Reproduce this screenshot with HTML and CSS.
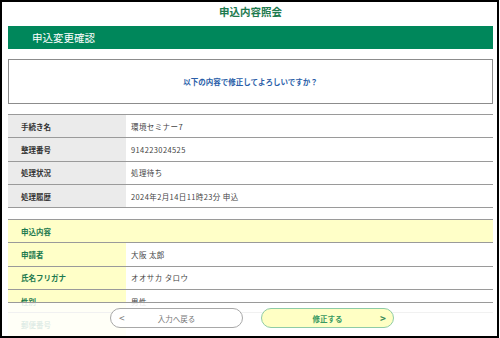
FILE: index.html
```html
<!DOCTYPE html>
<html lang="ja">
<head>
<meta charset="UTF-8" />
<meta name="viewport" content="width=device-width, initial-scale=1" />
<title>申込内容照会</title>
<link rel="stylesheet" href="styles.css">
</head>
<body>

<div class="frame">
  <h1 class="page-title">申込内容照会</h1>
  <div class="section-bar">申込変更確認</div>

  <div class="message">以下の内容で修正してよろしいですか？</div>

  <div class="info">
    <div class="row"><div class="label">手続き名</div><div class="value">環境セミナー7</div></div>
    <div class="row"><div class="label">整理番号</div><div class="value">914223024525</div></div>
    <div class="row"><div class="label">処理状況</div><div class="value">処理待ち</div></div>
    <div class="row"><div class="label">処理履歴</div><div class="value">2024年2月14日11時23分 申込</div></div>
  </div>

  <div class="info apply">
    <div class="row head"><div class="label">申込内容</div></div>
    <div class="row"><div class="label">申請者</div><div class="value">大阪 太郎</div></div>
    <div class="row"><div class="label">氏名フリガナ</div><div class="value">オオサカ タロウ</div></div>
    <div class="row"><div class="label">性別</div><div class="value">男性</div></div>
    <div class="row"><div class="label">郵便番号</div><div class="value">5300001</div></div>
  </div>

  <div class="footer">
    <button class="btn back"><span class="arrow">&lt;</span>入力へ戻る</button>
    <button class="btn next">修正する<span class="arrow">&gt;</span></button>
  </div>
</div>

</body>
</html>
```

FILE: styles.css
```css
* {
  box-sizing: border-box;
}
body {
  margin: 0;
  background: #fff;
  font-family: "Noto Sans CJK JP", "Noto Sans", sans-serif;
  color: #333;
}
.frame {
  position: relative;
  width: 499px;
  height: 338px;
  border: 2px solid #000;
  padding: 0 4px 0 6px;
  overflow: hidden;
}
.page-title {
  margin: 0 0 4px;
  height: 20px;
  line-height: 20px;
  text-align: center;
  font-size: 10.5px;
  font-weight: bold;
  color: #1d7a4e;
}
.section-bar {
  height: 23px;
  line-height: 23px;
  padding-left: 24px;
  background: #00875b;
  color: #fff;
  font-size: 10.5px;
}
.message {
  margin-top: 10px;
  height: 45px;
  border: 1px solid #8c8c8c;
  display: flex;
  align-items: center;
  justify-content: center;
  color: #2a5ea8;
  font-size: 7.5px;
  font-weight: bold;
}
.info {
  margin-top: 10px;
  border-bottom: 1px solid #9a9a9a;
}
.info.apply {
  margin-top: 11px;
  border-bottom: none;
}
.row {
  display: flex;
  height: 23.3px;
  border-top: 1px solid #9a9a9a;
  font-size: 7.5px;
}
.label {
  width: 118px;
  padding-left: 13px;
  display: flex;
  align-items: center;
  background: #ebebeb;
  font-weight: bold;
  color: #333;
}
.value {
  flex: 1;
  padding-left: 5px;
  display: flex;
  align-items: center;
  color: #444;
  letter-spacing: 0.4px;
}
.apply .label {
  background: #ffffc8;
  color: #1d7a4e;
}
.apply .head .label {
  width: auto;
  flex: 1;
}
.footer {
  position: absolute;
  left: 6px;
  right: 4px;
  top: 300px;
  bottom: 0;
  border-top: 1px solid #9a9a9a;
  background: rgba(255, 255, 255, 0.86);
  display: flex;
  justify-content: center;
  gap: 18px;
  padding-top: 5px;
  padding-left: 3px;
}
.btn {
  position: relative;
  width: 133px;
  height: 20px;
  border-radius: 10px;
  font-family: inherit;
  font-size: 7.5px;
  padding: 0;
  cursor: pointer;
}
.btn .arrow {
  position: absolute;
  top: 3px;
  font-size: 10px;
  line-height: 12px;
}
.btn.back {
  background: #fff;
  border: 1px solid #a8a8a8;
  color: #777;
}
.btn.back .arrow {
  left: 8px;
}
.btn.next {
  background: #ffffc4;
  border: 1px solid #8fcca6;
  color: #3a9a62;
  font-weight: bold;
}
.btn.next .arrow {
  right: 7px;
  color: #3a8a58;
}
```
